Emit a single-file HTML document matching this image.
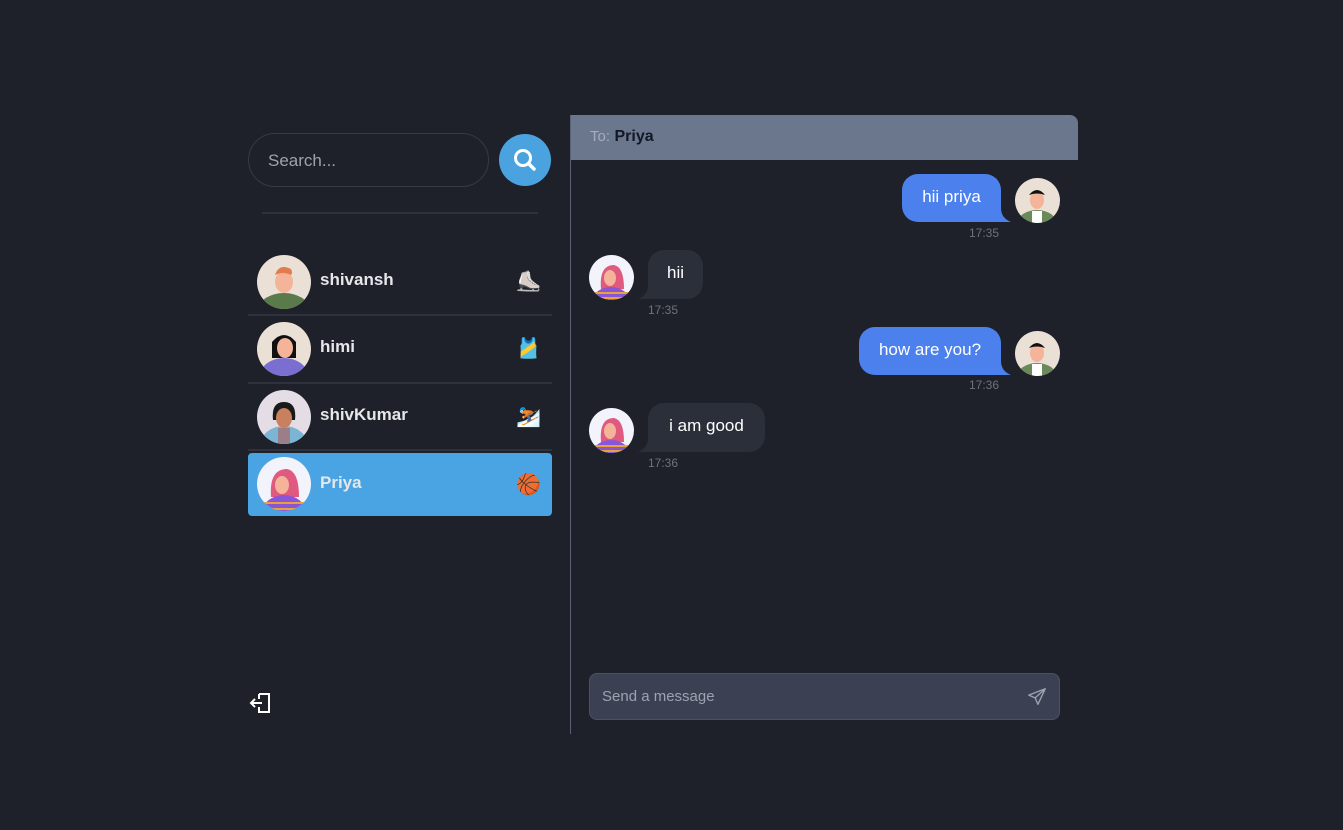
<!DOCTYPE html>
<html><head><meta charset="utf-8"><style>
*{box-sizing:border-box;margin:0;padding:0}
body{width:1343px;height:830px;background:#1e2129;font-family:"Segoe UI","Liberation Sans","DejaVu Sans",sans-serif;position:relative;overflow:hidden}
.abs{position:absolute}
.search{left:248px;top:133px;width:241px;height:54px;border:1px solid #353a45;border-radius:27px;color:#9ca3af;font-size:17px;padding:17px 0 0 19px}
.sbtn{left:499px;top:134px;width:52px;height:52px;border-radius:50%;background:#4aa3df}
.row{left:248px;width:304px;height:64px}
.row .av{position:absolute;left:9px;top:5px;width:54px;height:54px;border-radius:50%;overflow:hidden}
.row .nm{position:absolute;left:72px;top:20px;font-weight:bold;font-size:17px;color:#e5e7eb}
.row .em{position:absolute;left:268px;top:19px;font-size:20px}
.sep{left:248px;width:304px;height:2px;background:#2d323c}
.bub{color:#fff;font-size:17px;padding:13px 0 0;text-align:center;border-radius:16px}
.sent{background:#4c80ed;border-bottom-right-radius:0}
.recv{background:#2a2f3a;border-bottom-left-radius:0}
.t{font-size:12px;color:#6b7280}
.ma{width:45px;height:45px;border-radius:50%;overflow:hidden}
</style></head><body>
<div class="abs search">Search...</div>
<div class="abs sbtn"><svg width="52" height="52" viewBox="0 0 52 52"><circle cx="24" cy="24" r="7.5" fill="none" stroke="#fff" stroke-width="3"/><line x1="29.5" y1="29.5" x2="35" y2="35" stroke="#fff" stroke-width="3.5" stroke-linecap="round"/></svg></div>
<div class="abs" style="left:262px;top:212px;width:276px;height:2px;background:#2d313a"></div>

<div class="abs row" style="top:250px"><div class="av"><svg width="54" height="54"><rect width="54" height="54" fill="#ebe0d6"/><ellipse cx="27" cy="54" rx="25" ry="16" fill="#5a7a4c"/><ellipse cx="27" cy="27" rx="9" ry="11" fill="#f3b49a"/><path d="M18 20q4-12 16-6q2 4 0 6q-8-4-16 0z" fill="#e37c4d"/></svg></div><div class="nm">shivansh</div><div class="em">⛸️</div></div>
<div class="abs sep" style="top:314px"></div>
<div class="abs row" style="top:317px"><div class="av"><svg width="54" height="54"><rect width="54" height="54" fill="#ebe0d6"/><ellipse cx="27" cy="54" rx="24" ry="18" fill="#7a6fd0"/><path d="M15 36V20q12-14 24 0v16z" fill="#111"/><ellipse cx="28" cy="26" rx="8" ry="10" fill="#f3b49a"/></svg></div><div class="nm">himi</div><div class="em">🎽</div></div>
<div class="abs sep" style="top:382px"></div>
<div class="abs row" style="top:385px"><div class="av"><svg width="54" height="54"><rect width="54" height="54" fill="#e4dde6"/><ellipse cx="27" cy="56" rx="24" ry="20" fill="#7ab5d6"/><rect x="21" y="38" width="12" height="20" fill="#9b7f88"/><path d="M16 30q-2-18 11-18q13 0 11 18z" fill="#1a1a1a"/><ellipse cx="27" cy="28" rx="8" ry="10" fill="#c9805e"/></svg></div><div class="nm">shivKumar</div><div class="em">⛷️</div></div>
<div class="abs sep" style="top:449px"></div>
<div class="abs row" style="top:453px;height:63px;background:#4aa3e2;border-radius:4px"><div class="av" style="top:4px"><svg width="54" height="54"><rect width="54" height="54" fill="#f3f3fb"/><path d="M14 40q-2-28 16-28q12 2 12 28z" fill="#e05a80"/><ellipse cx="27" cy="56" rx="22" ry="18" fill="#8a55d6"/><path d="M6 46h42M6 52h42" stroke="#e8a23a" stroke-width="2"/><ellipse cx="25" cy="28" rx="7" ry="9" fill="#f3b49a"/></svg></div><div class="nm">Priya</div><div class="em">🏀</div></div>

<svg class="abs" style="left:249px;top:691px" width="26" height="24" viewBox="0 0 26 24"><path d="M10 3h10v18H10v-5M10 8V3" fill="none" stroke="#fff" stroke-width="2"/><path d="M2 12h11M6 8l-4 4 4 4" fill="none" stroke="#fff" stroke-width="2"/></svg>

<div class="abs" style="left:570px;top:115px;width:1px;height:619px;background:#5a6275"></div>
<div class="abs" style="left:571px;top:115px;width:507px;height:45px;background:#6b778d;border-top-right-radius:8px;padding:13px 0 0 19px;font-size:16px"><span style="color:#a3adbd;font-size:15px">To:</span> <b style="color:#111827">Priya</b></div>

<svg class="abs" style="left:995px;top:208px" width="16" height="14"><path d="M0 0H6Q6 10 16 14H0Z" fill="#4c80ed"/></svg>
<div class="abs bub sent" style="left:902px;top:174px;width:99px;height:48px">hii priya</div>
<div class="abs ma" style="left:1015px;top:178px"><svg width="45" height="45"><rect width="45" height="45" fill="#ebe0d6"/><ellipse cx="22" cy="46" rx="20" ry="14" fill="#6b8a5a"/><rect x="17" y="33" width="10" height="14" fill="#fff"/><ellipse cx="22" cy="22" rx="7" ry="9" fill="#f3b49a"/><path d="M14 17q8-10 16 0q-8-3-16 0z" fill="#111"/></svg></div>
<div class="abs t" style="left:969px;top:226px">17:35</div>

<div class="abs ma" style="left:589px;top:255px"><svg width="45" height="45"><rect width="45" height="45" fill="#f3f3fb"/><path d="M12 34q-2-24 13-24q10 2 10 24z" fill="#e05a80"/><ellipse cx="22" cy="47" rx="19" ry="15" fill="#8a55d6"/><path d="M4 38h38M4 43h38" stroke="#e8a23a" stroke-width="2"/><ellipse cx="21" cy="23" rx="6" ry="8" fill="#f3b49a"/></svg></div>
<svg class="abs" style="left:638px;top:285px" width="16" height="14"><path d="M16 0H10Q10 10 0 14H16Z" fill="#2a2f3a"/></svg>
<div class="abs bub recv" style="left:648px;top:250px;width:55px;height:49px">hii</div>
<div class="abs t" style="left:648px;top:303px">17:35</div>

<svg class="abs" style="left:995px;top:361px" width="16" height="14"><path d="M0 0H6Q6 10 16 14H0Z" fill="#4c80ed"/></svg>
<div class="abs bub sent" style="left:859px;top:327px;width:142px;height:48px">how are you?</div>
<div class="abs ma" style="left:1015px;top:331px"><svg width="45" height="45"><rect width="45" height="45" fill="#ebe0d6"/><ellipse cx="22" cy="46" rx="20" ry="14" fill="#6b8a5a"/><rect x="17" y="33" width="10" height="14" fill="#fff"/><ellipse cx="22" cy="22" rx="7" ry="9" fill="#f3b49a"/><path d="M14 17q8-10 16 0q-8-3-16 0z" fill="#111"/></svg></div>
<div class="abs t" style="left:969px;top:378px">17:36</div>

<div class="abs ma" style="left:589px;top:408px"><svg width="45" height="45"><rect width="45" height="45" fill="#f3f3fb"/><path d="M12 34q-2-24 13-24q10 2 10 24z" fill="#e05a80"/><ellipse cx="22" cy="47" rx="19" ry="15" fill="#8a55d6"/><path d="M4 38h38M4 43h38" stroke="#e8a23a" stroke-width="2"/><ellipse cx="21" cy="23" rx="6" ry="8" fill="#f3b49a"/></svg></div>
<svg class="abs" style="left:638px;top:438px" width="16" height="14"><path d="M16 0H10Q10 10 0 14H16Z" fill="#2a2f3a"/></svg>
<div class="abs bub recv" style="left:648px;top:403px;width:117px;height:49px">i am good</div>
<div class="abs t" style="left:648px;top:456px">17:36</div>

<div class="abs" style="left:589px;top:673px;width:471px;height:47px;background:#3b4152;border:1px solid #4b5263;border-radius:8px;color:#9ca3af;font-size:15px;padding:14px 0 0 12px">Send a message</div>
<svg class="abs" style="left:1026px;top:686px" width="22" height="22" viewBox="0 0 24 24"><path d="M21 3L3 10l7 3 3 7z M21 3L10 13" fill="none" stroke="#9ca3af" stroke-width="1.5" stroke-linejoin="round"/></svg>
</body></html>
